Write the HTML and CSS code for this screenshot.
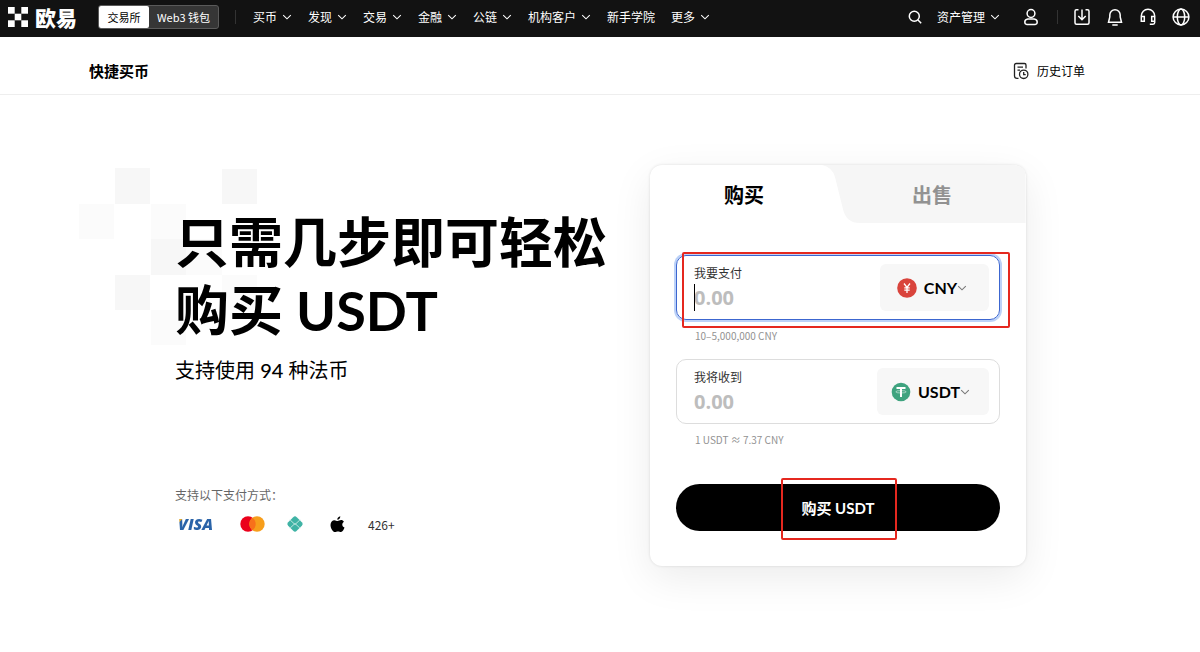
FILE: index.html
```html
<!DOCTYPE html>
<html lang="zh-CN">
<head>
    <meta charset="UTF-8">
    <meta name="viewport" content="width=device-width, initial-scale=1.0">
    <title>快捷买币 | 欧易</title>
    <link rel="stylesheet" href="styles.css">
</head>
<body>

    <!-- chevron shared by the nav and the currency buttons -->
    <svg width="0" height="0" class="defs">
        <symbol id="chevron" viewBox="0 0 10 10">
            <path d="M1.2 3.200 5 6.800 8.800 3.200" fill="none" stroke="currentColor" stroke-width="1.1"/>
        </symbol>
    </svg>

    <header class="topbar">
        <a href="#" class="logo">
            <svg width="20" height="20" viewBox="0 0 20 20" fill="#fff">
                <rect x="0" y="0" width="6.7" height="6.7"/>
                <rect x="13.3" y="0" width="6.7" height="6.7"/>
                <rect x="6.7" y="6.7" width="6.6" height="6.6"/>
                <rect x="0" y="13.3" width="6.7" height="6.7"/>
                <rect x="13.3" y="13.3" width="6.7" height="6.7"/>
            </svg>
            <span>欧易</span>
        </a>
        <div class="switch">
            <button class="active">交易所</button>
            <button>Web3 钱包</button>
        </div>
        <div class="divider"></div>
        <nav class="menu">
            <a href="#">买币 <svg class="chevron"><use href="#chevron"/></svg></a>
            <a href="#">发现 <svg class="chevron"><use href="#chevron"/></svg></a>
            <a href="#">交易 <svg class="chevron"><use href="#chevron"/></svg></a>
            <a href="#">金融 <svg class="chevron"><use href="#chevron"/></svg></a>
            <a href="#">公链 <svg class="chevron"><use href="#chevron"/></svg></a>
            <a href="#">机构客户 <svg class="chevron"><use href="#chevron"/></svg></a>
            <a href="#">新手学院</a>
            <a href="#">更多 <svg class="chevron"><use href="#chevron"/></svg></a>
        </nav>
        <div class="tools">
            <button class="icon" aria-label="搜索">
                <svg width="14" height="14" viewBox="0 0 14 14"><circle cx="6.3" cy="6.3" r="5"/><path d="M10 10l3.2 3.2"/></svg>
            </button>
            <a href="#" class="assets">资产管理 <svg class="chevron"><use href="#chevron"/></svg></a>
            <button class="icon user" aria-label="用户">
                <svg width="16" height="18" viewBox="0 0 16 18"><circle cx="8" cy="5.500" r="3.900"/><path d="M4.800 10.900h6.400q3 .3 3 3.200 0 2.300-2 2.300H3.800q-2 0-2-2.300 0-2.900 3-3.200z"/></svg>
            </button>
            <div class="divider"></div>
            <button class="icon" aria-label="下载">
                <svg width="18" height="18" viewBox="0 0 18 18"><path d="M5.500 1.800H3.500q-1.500 0-1.500 1.500v11.400q0 1.500 1.500 1.500h11q1.500 0 1.500-1.500V3.300q0-1.500-1.500-1.500h-2M9 1.500v10M5.300 8 9 11.700 12.700 8"/></svg>
            </button>
            <button class="icon" aria-label="通知">
                <svg width="18" height="18" viewBox="0 0 18 18"><path d="M3.800 9V7a5.200 5.200 0 0 1 10.400 0v2l1.300 5.200h-13zM6.300 17h5.400"/></svg>
            </button>
            <button class="icon" aria-label="客服">
                <svg width="18" height="18" viewBox="0 0 18 18"><path d="M2.300 9.500V8a6.700 6.700 0 0 1 13.400 0v6.500q0 1.700-1.700 1.700h-3.200M2.300 8.500h3v4.800h-3zM12.700 8.500h3v4.800h-3z"/></svg>
            </button>
            <button class="icon" aria-label="语言">
                <svg width="18" height="18" viewBox="0 0 18 18"><circle cx="9" cy="9" r="7.900"/><ellipse cx="9" cy="9" rx="3.700" ry="7.900"/><path d="M1.100 9h15.800"/></svg>
            </button>
        </div>
    </header>

    <div class="subbar">
        <h2>快捷买币</h2>
        <a href="#" class="history">
            <svg width="16" height="18" viewBox="0 0 16 18" fill="none" stroke="#222" stroke-width="1.300">
                <path d="M5.500 16.300H4Q1.500 16.300 1.500 14V3.200Q1.500 1.500 3.200 1.500H11.500Q13 1.500 13 3V6.500M4.500 5.200h5.500M4.500 8.200h2.500"/>
                <circle cx="10.700" cy="12.300" r="4.200"/>
                <path d="M10.700 10V12.600H12.700"/>
            </svg>
            历史订单
        </a>
    </div>

    <main class="hero">
        <section class="intro">
            <svg class="mosaic" width="179" height="178" viewBox="0 0 179 178">
                <g fill="#f7f7f7">
                    <rect x="36" y="0" width="35" height="36"/>
                    <rect x="143" y="1" width="35" height="35"/>
                    <rect x="72" y="71" width="35" height="36"/>
                    <rect x="36" y="107" width="35" height="35"/>
                </g>
                <g fill="#fbfbfb">
                    <rect x="0" y="36" width="35" height="35"/>
                    <rect x="72" y="36" width="35" height="35"/>
                    <rect x="107" y="71" width="36" height="36"/>
                    <rect x="143" y="107" width="35" height="35"/>
                    <rect x="72" y="142" width="35" height="35"/>
                </g>
            </svg>
            <h1>只需几步即可轻松<br>购买 USDT</h1>
            <p class="lead">支持使用 <b>94</b> 种法币</p>
            <p class="pay-label">支持以下支付方式：</p>
            <div class="pay-list">
                <span class="visa">VISA</span>
                <svg class="mastercard" width="25" height="16" viewBox="0 0 25 16">
                    <circle cx="8" cy="8" r="7.700" fill="#eb001b"/>
                    <circle cx="17" cy="8" r="7.700" fill="#f79e1b"/>
                    <path d="M12.500 1.750a7.700 7.700 0 0 1 0 12.500 7.700 7.700 0 0 1 0-12.500z" fill="#f8701b"/>
                </svg>
                <svg class="pix" width="18" height="18" viewBox="0 0 18 18">
                    <rect x="2.900" y="2.900" width="12.200" height="12.200" rx="2.500" fill="#3fb3a5" transform="rotate(45 9 9)"/>
                    <path d="M3 5.300h1.500L9 9.500l4.500-4.200H15M3 12.700h1.500L9 8.500l4.500 4.200H15" fill="none" stroke="#c9ebe6" stroke-width="0.900"/>
                </svg>
                <svg class="apple" width="15" height="17" viewBox="0 0 15 17">
                    <path d="M10.300 0.300c.1 1.700-1.300 3.500-3 3.500C7.100 2.200 8.600.500 10.300.300zM13.900 5.800c-2.400 1.500-2 4.700.6 5.800-.6 1.700-2 4.500-3.500 4.500-1.200 0-1.600-.7-3-.7s-1.900.7-3 .7C3 16.100.5 12.100.5 8.900c0-3 1.900-4.700 3.900-4.700 1.300 0 2.300.8 3.200.8.800 0 2-.9 3.500-.9 1.200 0 2.200.6 2.800 1.700z"/>
                </svg>
                <span class="more">426+</span>
            </div>
        </section>

        <form class="card">
            <div class="tabs">
                <svg class="tab-shape" viewBox="0 0 196 58" preserveAspectRatio="none">
                    <path d="M-8 0Q2 2 5 12L13 44Q16 58 30 58H196V0z" fill="#f6f6f6"/>
                </svg>
                <button type="button" class="tab active">购买</button>
                <button type="button" class="tab">出售</button>
            </div>
            <div class="fields">
                <div class="field focused marked">
                    <div class="amount">
                        <label for="pay">我要支付</label>
                        <input type="text" id="pay" placeholder="0.00">
                        <span class="caret"></span>
                    </div>
                    <button type="button" class="currency">
                        <svg width="20" height="20" viewBox="0 0 20 20">
                            <circle cx="10" cy="10" r="9.800" fill="#d9443c"/>
                            <path d="M7 5.500l3 4 3-4M10 9.500v5.500M7.300 9.800h5.400M7.300 12.200h5.400" fill="none" stroke="#fff" stroke-width="1.300"/>
                        </svg>
                        <span>CNY</span>
                        <svg class="chevron"><use href="#chevron"/></svg>
                    </button>
                </div>
                <p class="hint">10–5,000,000 CNY</p>
                <div class="field">
                    <div class="amount">
                        <label for="receive">我将收到</label>
                        <input type="text" id="receive" placeholder="0.00">
                    </div>
                    <button type="button" class="currency">
                        <svg width="20" height="20" viewBox="0 0 20 20">
                            <circle cx="10" cy="10" r="9.300" fill="#3fa37f"/>
                            <path d="M5.500 6h9M10 6v9" fill="none" stroke="#fff" stroke-width="2"/>
                            <ellipse cx="10" cy="9.800" rx="5.200" ry="1.200" fill="none" stroke="#fff" stroke-width="0.500"/>
                        </svg>
                        <span>USDT</span>
                        <svg class="chevron"><use href="#chevron"/></svg>
                    </button>
                </div>
                <p class="hint">1 USDT ≈ 7.37 CNY</p>
                <button type="button" class="submit"><span class="marked">购买 USDT</span></button>
            </div>
        </form>
    </main>

</body>
</html>
```
FILE: styles.css
```css
* {
    box-sizing: border-box;
}
body {
    margin: 0;
    background: #fff;
    color: #000;
    font-family: "Noto Sans CJK SC", sans-serif;
    font-size: 12px;
}
h1, h2, p {
    margin: 0;
}
a {
    color: inherit;
    text-decoration: none;
}
button {
    padding: 0;
    border: none;
    background: none;
    color: inherit;
    font: inherit;
    cursor: pointer;
}
svg {
    display: block;
    flex-shrink: 0;
}
.defs {
    position: absolute;
}
.chevron {
    width: 10px;
    height: 10px;
}

/* top bar */
.topbar {
    display: flex;
    align-items: center;
    height: 37px;
    padding: 0 10px 4px 8px;
    background: #121212;
    color: #fff;
}
.logo {
    display: flex;
    align-items: center;
    gap: 7px;
    font-size: 21px;
    font-weight: 900;
    line-height: 20px;
}
.switch {
    display: flex;
    height: 24px;
    margin-left: 21px;
    border: 1px solid #5a5a5a;
    border-radius: 3px;
    background: #363636;
    font-size: 11px;
}
.switch button {
    width: 69px;
    border-radius: 2px;
}
.switch .active {
    width: 50px;
    background: #fff;
    color: #000;
}
.divider {
    width: 1px;
    height: 14px;
    background: #333;
}
.topbar > .divider {
    margin: 0 17px 0 16px;
}
.menu {
    display: flex;
    gap: 16px;
}
.menu a, .assets {
    display: flex;
    align-items: center;
    gap: 5px;
    white-space: nowrap;
}
.tools {
    display: flex;
    align-items: center;
    gap: 15px;
    margin-left: auto;
}
.icon svg {
    fill: none;
    stroke: #fff;
    stroke-width: 1.5;
}
.user {
    margin: 0 3px 0 8px;
}

/* page title */
.subbar {
    display: flex;
    align-items: center;
    justify-content: space-between;
    height: 58px;
    padding: 10px 115px 0 89px;
    border-bottom: 1px solid #eee;
}
.subbar h2 {
    font-size: 15px;
    font-weight: 700;
}
.history {
    display: flex;
    align-items: center;
    gap: 8px;
}

/* hero */
.hero {
    display: flex;
    align-items: flex-start;
    justify-content: space-between;
    padding: 70px 174px 80px 175px;
}
.intro {
    position: relative;
    padding-top: 44px;
}
.mosaic {
    position: absolute;
    top: 3px;
    left: -96px;
    z-index: -1;
}
.intro h1 {
    font-family: Lato, "Noto Sans CJK SC", sans-serif;
    font-size: 54px;
    font-weight: 700;
    line-height: 68px;
    white-space: nowrap;
}
.lead {
    margin-top: 11px;
    font-family: Lato, "Noto Sans CJK SC", sans-serif;
    font-size: 20px;
    line-height: 28px;
}
.lead b {
    font-weight: 500;
}
.pay-label {
    margin-top: 102px;
    color: #666;
    line-height: 18px;
}
.pay-list {
    display: flex;
    align-items: center;
    height: 24px;
    margin-top: 8px;
}
.visa {
    width: 65px;
    padding-left: 3px;
    background: linear-gradient(135deg, #e0a82e 9px, #2a63a8 10px);
    background-clip: text;
    color: transparent;
    font-family: "Open Sans", sans-serif;
    font-size: 16px;
    font-style: italic;
    font-weight: 800;
}
.mastercard {
    margin-right: 21px;
}
.pix {
    margin-right: 26px;
}
.apple {
    margin-right: 23px;
}
.more {
    color: #333;
}

/* trade card */
.card {
    width: 376px;
    border-radius: 12px;
    background: #fff;
    box-shadow: 0 0 3px rgba(0, 0, 0, 0.12), 0 12px 40px rgba(0, 0, 0, 0.08);
    overflow: hidden;
}
.tabs {
    position: relative;
    display: flex;
    height: 58px;
}
.tab-shape {
    position: absolute;
    top: 0;
    right: 0;
    width: 52%;
    height: 100%;
    overflow: visible;
}
.tab {
    position: relative;
    flex: 1;
    color: #929292;
    font-size: 20px;
    font-weight: 700;
}
.tab.active {
    color: #000;
}
.fields {
    padding: 32px 26px 35px;
}
.field {
    position: relative;
    display: flex;
    align-items: center;
    justify-content: space-between;
    height: 65px;
    padding: 0 10px 0 17px;
    border: 1px solid #ddd;
    border-radius: 10px;
}
.field.focused {
    border-color: #3c66d0;
    box-shadow: 0 0 0 2px #bcd2f8;
}
.amount {
    position: relative;
    flex: 1;
    padding-top: 2px;
}
.amount label {
    display: block;
    color: #333;
    line-height: 18px;
}
.amount input {
    display: block;
    width: 100%;
    height: 32px;
    padding: 0;
    border: none;
    outline: none;
    background: none;
    font-family: "Open Sans", "Noto Sans CJK SC", sans-serif;
    font-size: 20px;
    font-weight: 700;
}
.amount input::placeholder {
    color: #bdbdbd;
}
.caret {
    position: absolute;
    left: 0;
    bottom: 3px;
    width: 1px;
    height: 27px;
    background: #000;
}
.currency {
    display: flex;
    align-items: center;
    justify-content: center;
    min-width: 109px;
    height: 47px;
    padding: 0 19px 0 14px;
    border-radius: 6px;
    background: #f7f7f7;
    font-family: Lato, "Noto Sans CJK SC", sans-serif;
    font-size: 16px;
    font-weight: 700;
}
.currency span {
    margin-left: 7px;
}
.currency .chevron {
    color: #777;
}
.hint {
    margin: 6px 0 13px 19px;
    color: #929292;
    font-size: 10px;
    line-height: 20px;
}
.submit {
    display: block;
    width: 100%;
    height: 47px;
    margin-top: 34px;
    border-radius: 24px;
    background: #000;
    color: #fff;
    font-family: Lato, "Noto Sans CJK SC", sans-serif;
    font-size: 15px;
    font-weight: 700;
}

/* red highlight frames */
.marked {
    position: relative;
}
.marked::after {
    content: "";
    position: absolute;
    border: 2px solid #e5281f;
    border-radius: 2px;
    pointer-events: none;
}
.field.marked::after {
    top: -4px;
    right: -11px;
    bottom: -9px;
    left: 5px;
}
.submit .marked::after {
    top: -21px;
    right: -22px;
    bottom: -23px;
    left: -20px;
}
```
